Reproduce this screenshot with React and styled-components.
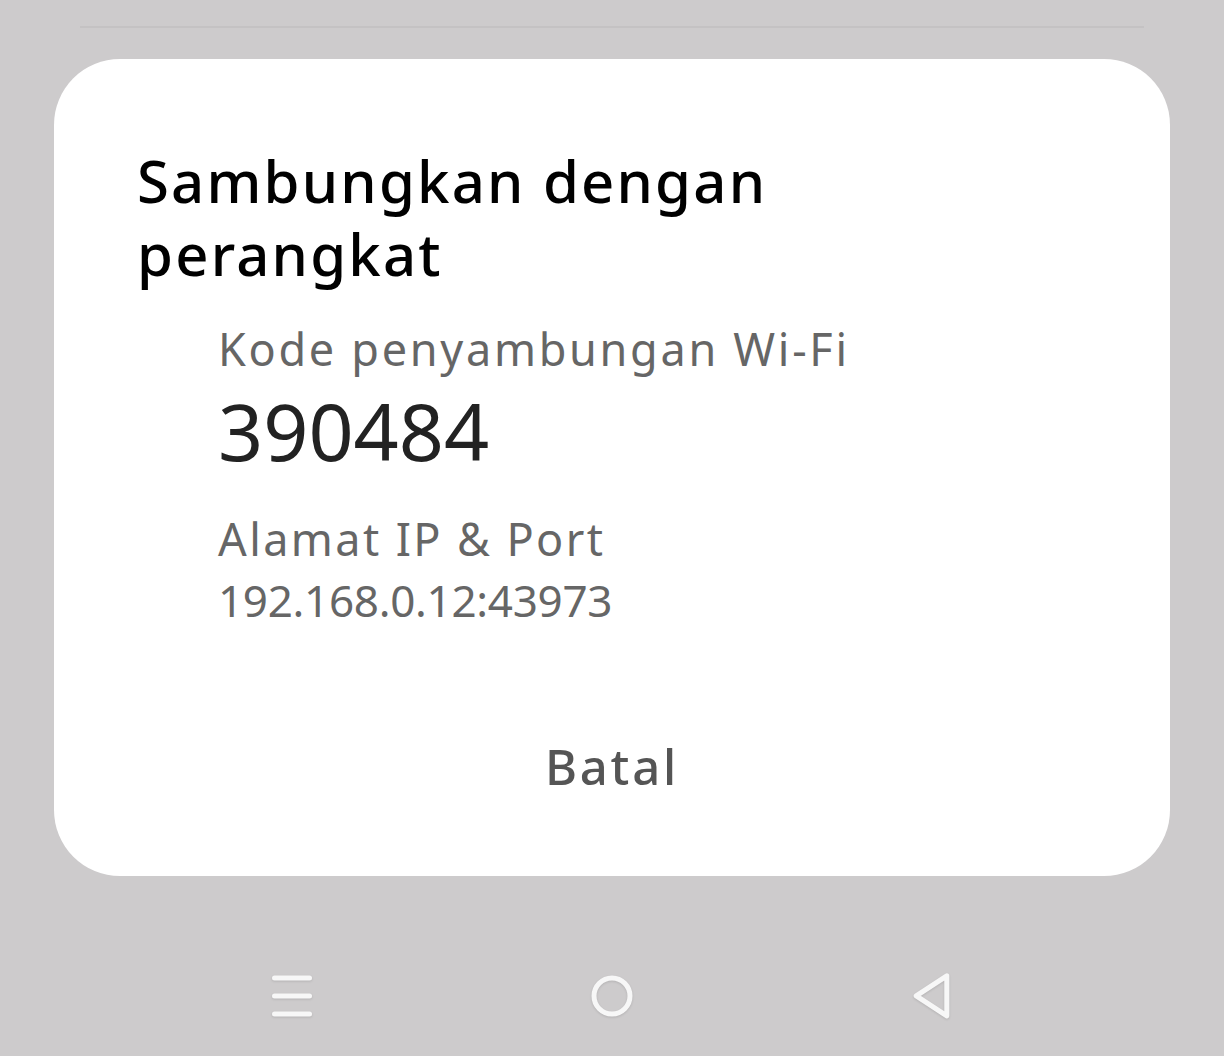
import React from "react";
import styled, { createGlobalStyle } from "styled-components";

const Global = createGlobalStyle`
  html, body { margin: 0; padding: 0; background: #cdcbcc; }
  body { font-family: "Noto Sans", "DejaVu Sans", sans-serif; }
`;

const Screen = styled.div`
  width: 1224px;
  height: 1056px;
  display: flex;
  flex-direction: column;
  align-items: center;
  background: #cdcbcc;
  overflow: hidden;
`;

const TopRule = styled.div`
  margin-top: 26px;
  width: 1064px;
  height: 2px;
  background: #c4c2c3;
`;

const Card = styled.div`
  margin-top: 31px;
  width: 1116px;
  height: 817px;
  box-sizing: border-box;
  background: #ffffff;
  border-radius: 66px;
  padding: 85px 0 0 83px;
  display: flex;
  flex-direction: column;
`;

const Title = styled.h1`
  margin: 0;
  font-family: "Noto Sans", sans-serif;
  font-weight: 500;
  font-size: 58px;
  line-height: 73px;
  letter-spacing: 2.2px;
  color: #000;
  width: 720px;
`;

const Info = styled.div`
  padding-left: 81px;
  display: flex;
  flex-direction: column;
`;

const Label = styled.div`
  font-size: 45px;
  line-height: 50px;
  letter-spacing: ${(p) => p.$ls}px;
  color: #666666;
  margin-top: ${(p) => p.$mt}px;
`;

const Code = styled.div`
  margin-top: 12px;
  font-size: 79px;
  line-height: 90px;
  color: #222222;
`;

const Value = styled.div`
  margin-top: 11px;
  font-size: 44px;
  line-height: 50px;
  letter-spacing: -0.3px;
  color: #666666;
`;

const Actions = styled.div`
  margin-top: auto;
  margin-bottom: 80px;
  display: flex;
  justify-content: center;
  padding-right: 83px;
`;

const Button = styled.button`
  background: none;
  border: none;
  padding: 0;
  font-family: "Noto Sans", sans-serif;
  font-size: 49px;
  line-height: 60px;
  font-weight: 500;
  letter-spacing: 2.8px;
  color: #555555;
`;

const NavBar = styled.div`
  margin-top: 95px;
  display: grid;
  grid-template-columns: repeat(3, 320px);
  justify-items: center;
  align-items: center;
  height: 50px;
`;

const NavIcon = styled.svg`
  display: block;
  filter: drop-shadow(0 1px 1px rgba(0, 0, 0, 0.12));
`;

export default function App() {
  return (
    <>
      <Global />
      <Screen>
        <TopRule />
        <Card>
          <Title>Sambungkan dengan perangkat</Title>
          <Info>
            <Label $mt={34} $ls={2.7}>Kode penyambungan Wi-Fi</Label>
            <Code>390484</Code>
            <Label $mt={38} $ls={2.4}>Alamat IP &amp; Port</Label>
            <Value>192.168.0.12:43973</Value>
          </Info>
          <Actions>
            <Button>Batal</Button>
          </Actions>
        </Card>
        <NavBar>
          <NavIcon width="40" height="42" viewBox="0 0 40 42">
            <g stroke="#f7f7f7" strokeWidth="5" strokeLinecap="round">
              <line x1="2.5" y1="3" x2="37.5" y2="3" />
              <line x1="2.5" y1="21" x2="37.5" y2="21" />
              <line x1="2.5" y1="39" x2="37.5" y2="39" />
            </g>
          </NavIcon>
          <NavIcon width="46" height="46" viewBox="0 0 46 46">
            <circle cx="23" cy="23" r="18" fill="none" stroke="#f7f7f7" strokeWidth="5" />
          </NavIcon>
          <NavIcon width="40" height="50" viewBox="0 0 40 50">
            <path
              d="M34.8 4.8 L4.2 24.8 L34.8 44.8 Z"
              fill="none"
              stroke="#f7f7f7"
              strokeWidth="5"
              strokeLinejoin="round"
            />
          </NavIcon>
        </NavBar>
      </Screen>
    </>
  );
}
